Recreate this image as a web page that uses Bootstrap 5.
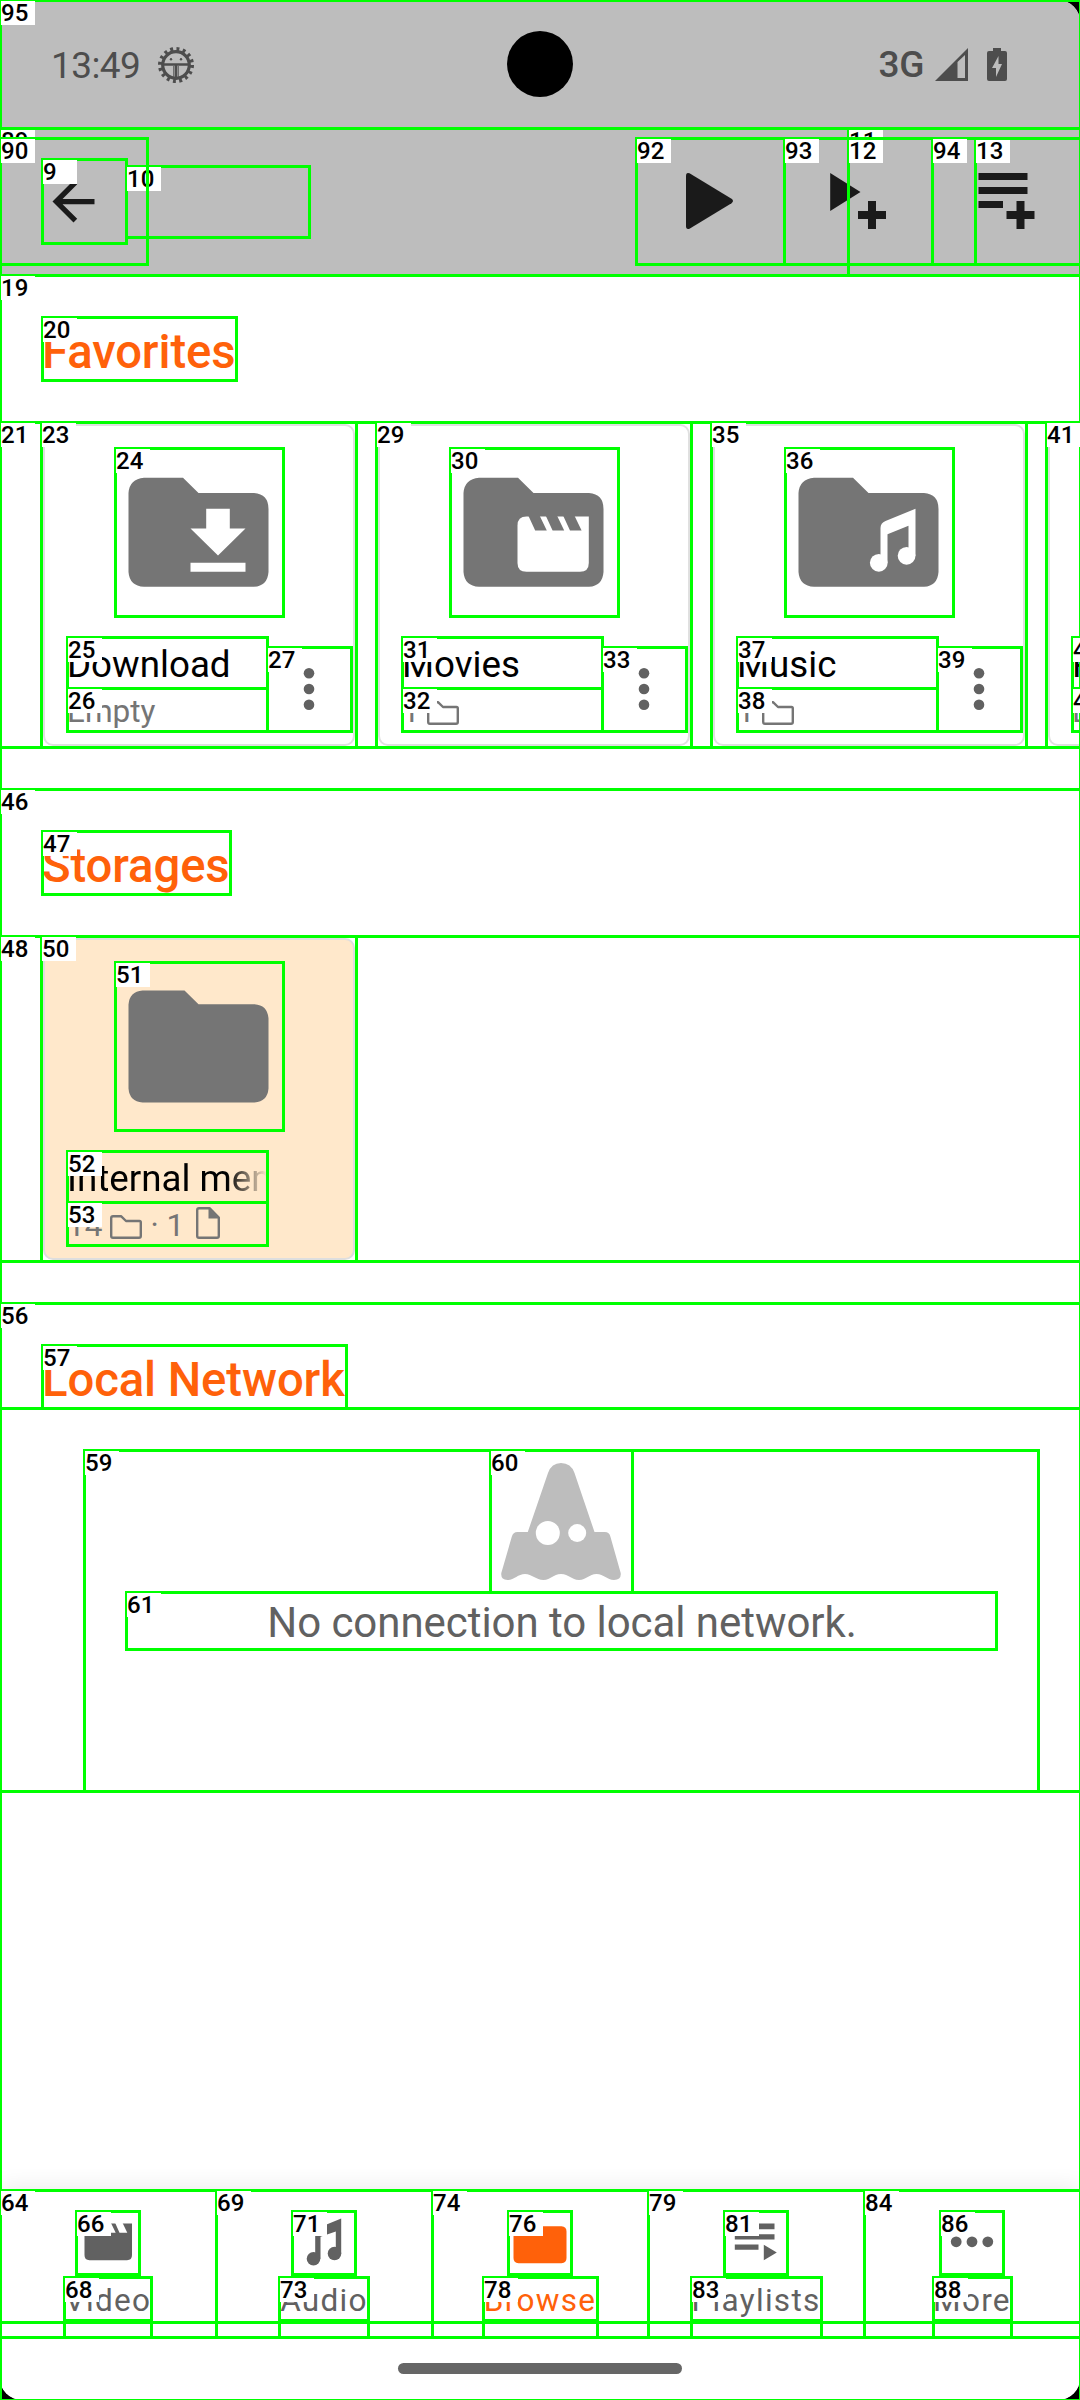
<!DOCTYPE html>
<html lang="en">
<head>
<meta charset="utf-8">
<meta name="viewport" content="width=device-width, initial-scale=1">
<title>Browse</title>
<link href="https://cdn.jsdelivr.net/npm/bootstrap@5.3.0/dist/css/bootstrap.min.css" rel="stylesheet">
<style>
  :root { --accent: #ff610a; --ink: #616161; --folder: #757575; }
  body { background: #000; font-family: Roboto, "Noto Sans", sans-serif; margin: 0; }
  svg { display: block; flex: none; }
  .screen { width: 1080px; height: 2400px; background: #fff; border-radius: 22px; }
  .status-bar { height: 128px; padding: 2px 73px 0 51px; background: #bdbdbd; color: #4d4d4d; font-size: 37px; line-height: 128px; }
  .status-clock { letter-spacing: -.6px; padding-top: 1px; }
  .status-net { font-weight: 500; letter-spacing: -.4px; }
  .camera { width: 66px; height: 66px; left: 507px; top: 31px; }
  .app-bar { height: 147px; background: #bdbdbd; color: #1a1a1a; padding-left: 42px; }
  .action { width: 147.7px; }
  .section-title { height: 147px; padding: 6px 0 0 42px; margin: 0; font-size: 47.25px; line-height: 142px; letter-spacing: -.1px; font-weight: 500; color: var(--accent); }
  .shelf { height: 325px; margin-bottom: 42px; padding: 2px 0 0 43px; gap: 23px; }
  .tile { width: 312px; height: 322px; flex: none; border: 2px solid #e0e0e0; border-radius: 10px; color: #000; }
  .tile-picked { background: #ffe8cb; border-color: #dedede; }
  .tile-art { margin: 22.5px auto 0; color: var(--folder); }
  .tile-foot { padding: 23.5px 0 0 22px; }
  .tile-text { width: 200px; }
  .tile-name { font-size: 36.75px; line-height: 50px; }
  .tile-info { font-size: 31.5px; line-height: 43px; color: var(--folder); }
  .fade-end { -webkit-mask-image: linear-gradient(90deg, #000 80%, transparent); mask-image: linear-gradient(90deg, #000 80%, transparent); }
  .kebab { width: 84px; height: 84px; margin-top: 7px; color: var(--ink); }
  .empty-panel { margin: 0 41px 0 85px; height: 341px; color: var(--ink); font-size: 42px; line-height: 62px; letter-spacing: -.05px; }
  .bottom-nav { height: 147px; background: #fff; color: var(--ink); font-size: 31.5px; line-height: 45px; letter-spacing: 1.3px; box-shadow: 0 -2px 22px rgba(0,0,0,.09); }
  .nav-cell { padding-top: 20.5px; }
  .nav-cell.current { color: var(--accent); }
  .home-area { height: 63px; background: #fff; padding-top: 26px; }
  .home-pill { width: 284px; height: 11px; background: #666; }
  .marks { inset: 0; pointer-events: none; }
  .mark-box { position: absolute; border: 3px solid #0f0; }
  .mark-tag { position: absolute; width: 34px; height: 24px; background: #fff; color: #000; font-size: 24px; font-weight: 500; line-height: 25px; white-space: nowrap; }
</style>
</head>
<body>
<svg width="0" height="0" class="position-absolute">
  <symbol id="folder" viewBox="0 0 168 168"><path fill="currentColor" d="M29 28.8H68L83.5 44H139Q153.500 45 153.500 60V123Q152.500 137 139 137.800H29Q14.500 137 13.500 123V44Q14.500 30 29 28.800Z"/></symbol>
  <symbol id="mini-folder" viewBox="0 0 32 28"><path fill="none" stroke="currentColor" stroke-width="2.4" stroke-linejoin="round" d="M3 4.200H11L16 9H29.500Q30.800 9 30.800 10.500V24Q30.800 25.800 29 25.800H3Q1.200 25.800 1.200 24V6Q1.200 4.200 3 4.200Z"/></symbol>
  <symbol id="kebab" viewBox="0 0 84 84"><g fill="currentColor"><circle cx="42" cy="26.300" r="5.300"/><circle cx="42" cy="42" r="5.300"/><circle cx="42" cy="57.700" r="5.300"/></g></symbol>
</svg>

<div class="screen position-relative overflow-hidden d-flex flex-column">
  <header>
    <div class="status-bar d-flex align-items-center justify-content-between position-relative">
      <div class="d-flex align-items-center">
        <span class="status-clock">13:49</span>
        <svg width="38" height="38" viewBox="0 0 38 38" style="margin-left:17px" fill="none" stroke="currentColor">
          <circle cx="19" cy="19" r="16" stroke-width="4" stroke-dasharray="2.900 3.383"/>
          <circle cx="19" cy="19" r="13.300" stroke-width="3.200"/>
          <path stroke-width="2.400" d="M6 18.500H32M19 19V32"/><path stroke-width="1" d="M16.800 20V31M21.200 20V31"/>
          <g fill="currentColor" stroke="none"><circle cx="14" cy="13.200" r="1.200"/><circle cx="24" cy="13.200" r="1.200"/></g>
        </svg>
      </div>
      <div class="camera position-absolute rounded-circle bg-black"></div>
      <div class="d-flex align-items-center">
        <span class="status-net">3G</span>
        <svg width="33" height="34" viewBox="0 0 33 34" style="margin-left:11px"><path fill="currentColor" fill-rule="evenodd" d="M0 33L33 0V33ZM22.500 14V30H30V7Z"/></svg>
        <svg width="20" height="34" viewBox="0 0 20 34" style="margin-left:19px"><path fill="currentColor" d="M6 0H14V3H18Q20 3 20 5V31Q20 33 18 33H2Q0 33 0 31V5Q0 3 2 3H6Z"/><path fill="#bdbdbd" d="M11.500 8L5 20H9V29L15 16H11.500Z"/></svg>
      </div>
    </div>
    <div class="app-bar d-flex align-items-center justify-content-between">
      <svg width="63" height="63" viewBox="0 0 24 24"><path fill="currentColor" d="M20 11H7.830l5.590-5.590L12 4l-8 8 8 8 1.410-1.410L7.830 13H20v-2z"/></svg>
      <div class="d-flex">
        <div class="action d-flex justify-content-center"><svg width="63" height="63" viewBox="0 0 63 63"><path fill="currentColor" d="M7 6Q7 2 10.500 3.300L52.500 28.800Q55.500 31 52.500 33.200L10.500 58.700Q7 60 7 56Z"/></svg></div>
        <div class="action d-flex justify-content-center"><svg width="63" height="63" viewBox="0 0 63 63"><path fill="currentColor" d="M3.200 3L33.500 22L3.200 41ZM41 31H49V41H59V49H49V59H41V49H31V41H41Z"/></svg></div>
        <div class="action d-flex justify-content-center"><svg width="63" height="63" viewBox="0 0 63 63"><path fill="currentColor" d="M3.500 3H52.500V10H3.500ZM3.500 17H52.500V24H3.500ZM3.500 31H28V38H3.500ZM41.500 31H49.500V41H59.500V49H49.500V59H41.500V49H31.500V41H41.500Z"/></svg></div>
      </div>
    </div>
  </header>

  <main class="flex-grow-1 overflow-hidden">
    <h2 class="section-title">Favorites</h2>
    <div class="shelf d-flex overflow-hidden">
      <div class="tile">
        <svg class="tile-art" width="168" height="168" viewBox="0 0 168 168"><use href="#folder"/><path fill="#fff" d="M91.200 59.800H114.800V79.500H130.500L103 106.500L75.500 79.500H91.200ZM75.500 113.800H130.500V122.800H75.500Z"/></svg>
        <div class="tile-foot d-flex"><div class="tile-text"><div class="tile-name">Download</div><div class="tile-info">Empty</div></div><svg class="kebab"><use href="#kebab"/></svg></div>
      </div>
      <div class="tile">
        <svg class="tile-art" width="168" height="168" viewBox="0 0 168 168"><use href="#folder"/><path fill="#fff" d="M76.500 67.500H138.800V114Q138.800 122.800 130 122.800H76.500Q67.500 122.800 67.500 114V76.500Q67.500 67.500 76.500 67.500Z"/><path fill="currentColor" d="M78.500 67H89.800L96.800 81.500H85.200ZM95.900 67H107.200L114.200 81.500H102.600ZM113.300 67H124.600L131.600 81.500H120Z"/></svg>
        <div class="tile-foot d-flex"><div class="tile-text"><div class="tile-name">Movies</div><div class="tile-info d-flex align-items-center">1<svg width="32" height="28" style="margin-left:7px"><use href="#mini-folder"/></svg></div></div><svg class="kebab"><use href="#kebab"/></svg></div>
      </div>
      <div class="tile">
        <svg class="tile-art" width="168" height="168" viewBox="0 0 168 168"><use href="#folder"/><path fill="#fff" d="M130.500 59.800V106.800H123.500V76.800L102.500 85.200V113.800H95.500V79Q95.500 74 100.500 72Z"/><circle fill="#fff" cx="93.800" cy="113.800" r="8.900"/><circle fill="#fff" cx="121.600" cy="106.800" r="8.900"/></svg>
        <div class="tile-foot d-flex"><div class="tile-text"><div class="tile-name">Music</div><div class="tile-info d-flex align-items-center">1<svg width="32" height="28" style="margin-left:7px"><use href="#mini-folder"/></svg></div></div><svg class="kebab"><use href="#kebab"/></svg></div>
      </div>
      <div class="tile">
        <svg class="tile-art" width="168" height="168" viewBox="0 0 168 168"><use href="#folder"/></svg>
        <div class="tile-foot d-flex"><div class="tile-text"><div class="tile-name">Podcasts</div><div class="tile-info">Empty</div></div><svg class="kebab"><use href="#kebab"/></svg></div>
      </div>
    </div>

    <h2 class="section-title">Storages</h2>
    <div class="shelf d-flex">
      <div class="tile tile-picked">
        <svg class="tile-art" width="168" height="168" viewBox="0 0 168 168"><path fill="currentColor" d="M27.500 27.500H69.500L83.500 41.200H139.500Q152.500 42 153.500 55.500V125.500Q152.500 138.500 139.500 139.500H27.500Q14.500 138.500 13.500 125.500V41.500Q14.500 28.500 27.500 27.500Z"/></svg>
        <div class="tile-foot d-flex"><div class="tile-text"><div class="tile-name text-nowrap overflow-hidden fade-end">Internal memory</div><div class="tile-info d-flex align-items-center">14<svg width="32" height="28" style="margin:0 8px"><use href="#mini-folder"/></svg>· 1<svg width="24" height="32" viewBox="0 0 24 32" style="margin:-5px 0 0 12px"><path fill="none" stroke="currentColor" stroke-width="2.400" stroke-linejoin="round" d="M3 1.200H13.500L22.800 10.500V29Q22.800 30.800 21 30.800H3Q1.200 30.800 1.200 29V3Q1.200 1.200 3 1.200Z"/><path fill="currentColor" d="M12.500 1V11.500H23Z"/></svg></div></div></div>
      </div>
    </div>

    <h2 class="section-title">Local Network</h2>
    <div class="empty-panel d-flex flex-column align-items-center">
      <svg width="142" height="142" viewBox="0 0 142 142"><path fill="#bdbdbd" d="M70 13Q60.500 13 57 23L36.800 82H26.500Q22 82 20.700 87L10.300 123Q9.500 130 16.500 130C23 130 27 124 34 124S45 130 52.500 130S62 124 70 124S80.500 130 88 130S98 124 105.500 124S116 130 123 130Q130.500 130 129.700 123L119.500 87Q118.500 82 113.700 82H103.500L83.500 23Q80 13 70 13Z"/><circle cx="56.800" cy="83" r="12" fill="#fff"/><circle cx="86.200" cy="83" r="9" fill="#fff"/></svg>
      <div>No connection to local network.</div>
    </div>
  </main>

  <nav class="bottom-nav d-flex text-center position-relative">
    <div class="nav-cell col d-flex flex-column align-items-center"><svg width="63" height="63" viewBox="0 0 63 63" fill="currentColor"><path d="M12.500 12.500H55V44Q55 49.200 50 49.200H12.500Q7.500 49.200 7.500 44V17.500Q7.500 12.500 12.500 12.500Z"/><path fill="#fff" d="M15.100 12H22.400L27.100 21.700H19.300ZM26.700 12H34L38.700 21.700H30.900ZM38.200 12H45.600L50.300 21.700H42.500Z"/></svg><span class="pt-1">Video</span></div>
    <div class="nav-cell col d-flex flex-column align-items-center"><svg width="63" height="63" viewBox="0 0 63 63" fill="currentColor"><path d="M48.200 7.500V42.500H42.800V20.500L27.500 25.800V47.800H22.200V21Q22.200 18 25 17Z"/><circle cx="20.500" cy="47.800" r="6.800"/><circle cx="41.500" cy="42.500" r="6.800"/></svg><span class="pt-1">Audio</span></div>
    <div class="nav-cell current col d-flex flex-column align-items-center"><svg width="63" height="63" viewBox="0 0 63 63" fill="currentColor"><path d="M9.500 10H26L31 15.200H52.500Q57.500 15.500 57.500 20.500V47Q57.500 52 52.500 52.200H9.500Q4.500 52 4.500 47V15Q4.500 10.200 9.500 10Z"/></svg><span class="pt-1">Browse</span></div>
    <div class="nav-cell col d-flex flex-column align-items-center"><svg width="63" height="63" viewBox="0 0 63 63" fill="currentColor"><path d="M9.800 12.500H49.500V18.200H9.800ZM9.800 23.200H49.500V28.500H9.800ZM9.800 33.500H33.500V38.800H9.800ZM38.800 33.800L51.800 41.500L38.800 49.200Z"/></svg><span class="pt-1">Playlists</span></div>
    <div class="nav-cell col d-flex flex-column align-items-center"><svg width="63" height="63" viewBox="0 0 63 63" fill="currentColor"><circle cx="15.200" cy="30.800" r="5.400"/><circle cx="31" cy="30.800" r="5.400"/><circle cx="46.800" cy="30.800" r="5.400"/></svg><span class="pt-1">More</span></div>
  </nav>
  <div class="home-area position-relative"><div class="home-pill rounded-pill mx-auto"></div></div>
</div>

<div class="marks position-absolute overflow-hidden" id="marks"></div>

<script src="https://cdn.jsdelivr.net/npm/bootstrap@5.3.0/dist/js/bootstrap.bundle.min.js"></script>
<script>
  // Element bounds: [label, left, top, right, bottom]
  const bounds = [
    ['', 0, 0, 1080, 2400], ['', 0, 1408, 1080, 1791], ['', 0, 2190, 1080, 2322],
    [89, 0, 128, 1080, 275],
    [9, 42, 159, 126, 243], [10, 126, 166, 309, 237],
    [11, 848, 128, 1080, 275], [12, 848, 138, 975, 264], [13, 975, 138, 1080, 264],
    [19, 0, 275, 1080, 422], [20, 42, 317, 236, 380], [21, 0, 422, 1080, 747],
    [23, 41, 422, 356, 747], [24, 115, 448, 283, 616], [25, 67, 637, 267, 688], [26, 67, 688, 267, 731], [27, 267, 647, 351, 731],
    [29, 376, 422, 691, 747], [30, 450, 448, 618, 616], [31, 402, 637, 602, 688], [32, 402, 688, 602, 731], [33, 602, 647, 686, 731],
    [35, 711, 422, 1026, 747], [36, 785, 448, 953, 616], [37, 737, 637, 937, 688], [38, 737, 688, 937, 731], [39, 937, 647, 1021, 731],
    [41, 1046, 422, 1082, 747], [43, 1072, 637, 1100, 688], [44, 1072, 688, 1100, 731],
    [46, 0, 789, 1080, 936], [47, 42, 831, 230, 894], [48, 0, 936, 1080, 1261],
    [50, 41, 936, 356, 1261], [51, 115, 962, 283, 1130], [52, 67, 1151, 267, 1202], [53, 67, 1202, 267, 1245],
    [56, 0, 1303, 1080, 1408], [57, 42, 1345, 346, 1408], [59, 84, 1450, 1038, 1791], [60, 490, 1450, 632, 1592], [61, 126, 1592, 996, 1649],
    [64, 0, 2190, 216, 2337], [66, 76, 2211, 139, 2274], ['', 64, 2277, 151, 2337], [68, 64, 2277, 151, 2320],
    [69, 216, 2190, 432, 2337], [71, 292, 2211, 355, 2274], ['', 279, 2277, 368, 2337], [73, 279, 2277, 368, 2320],
    [74, 432, 2190, 648, 2337], [76, 508, 2211, 571, 2274], ['', 483, 2277, 597, 2337], [78, 483, 2277, 597, 2320],
    [79, 648, 2190, 864, 2337], [81, 724, 2211, 787, 2274], ['', 691, 2277, 821, 2337], [83, 691, 2277, 821, 2320],
    [84, 864, 2190, 1080, 2337], [86, 940, 2211, 1003, 2274], ['', 933, 2277, 1011, 2337], [88, 933, 2277, 1011, 2320],
    [90, 0, 138, 147, 264], [92, 636, 138, 784, 264], [93, 784, 138, 932, 264], [94, 932, 138, 1080, 264],
    [95, 0, 0, 1080, 128]
  ];
  const layer = document.getElementById('marks');
  layer.style.height = '2400px';
  const outline = ([, l, t, r, b]) => {
    const box = document.createElement('div');
    box.className = 'mark-box';
    box.style.cssText = `left:${l - 1}px;top:${t - 1}px;width:${r - l + 3}px;height:${b - t + 3}px`;
    layer.append(box);
  };
  const tag = ([label, l, t]) => {
    if (label === '') return;
    const el = document.createElement('div');
    el.className = 'mark-tag';
    el.style.cssText = `left:${l + 1}px;top:${t + 1}px`;
    el.textContent = label;
    layer.append(el);
  };
  bounds.forEach(row => { outline(row); tag(row); });
</script>
</body>
</html>
